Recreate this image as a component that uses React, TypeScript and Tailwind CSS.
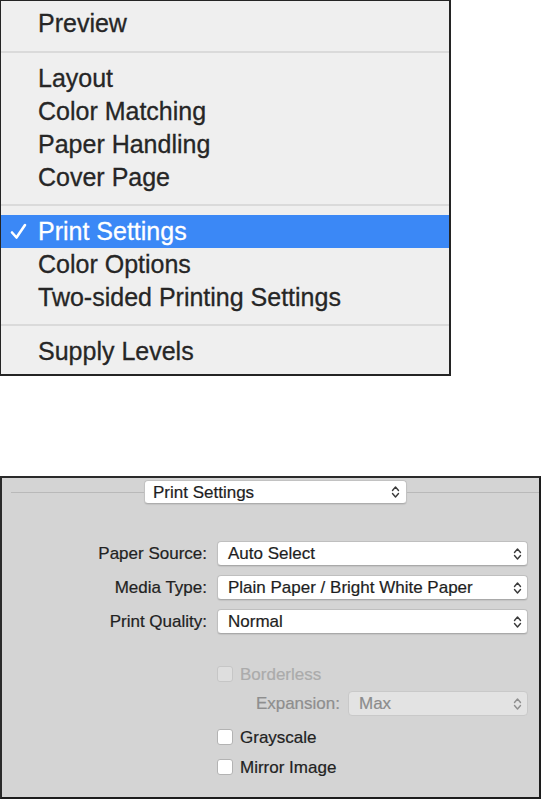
import React from 'react';

const font = { fontFamily: '"Liberation Sans", Arial, Helvetica, sans-serif' };

function Separator({ top = 10 }: { top?: number }) {
  return (
    <div className={top === 11 ? 'pt-[11px] pb-[9px]' : 'pt-[10px] pb-[9px]'}>
      <div className="h-[2px] bg-[#dadada]" />
    </div>
  );
}

function MenuItem({ label, selected = false }: { label: string; selected?: boolean }) {
  return (
    <div
      className={
        'relative flex h-[33px] items-center pl-[37px] text-[25px] leading-none [-webkit-text-stroke:0.3px_currentColor] ' +
        (selected ? 'bg-[#3b88f6] text-white' : 'text-[#262626]')
      }
    >
      {selected && (
        <svg className="absolute left-[9px] top-[8px]" width="17" height="17" viewBox="0 0 17 17">
          <path d="M2 9.5 L6.5 14.5 L15 2" fill="none" stroke="white" strokeWidth="2.6" strokeLinecap="round" strokeLinejoin="round" />
        </svg>
      )}
      {label}
    </div>
  );
}

function Chevrons({ color = '#3a3a3a' }: { color?: string }) {
  return (
    <svg width="9" height="14" viewBox="0 0 9 14">
      <path d="M1.5 5.5 L4.5 2 L7.5 5.5" fill="none" stroke={color} strokeWidth="1.4" strokeLinecap="round" strokeLinejoin="round" />
      <path d="M1.5 8.5 L4.5 12 L7.5 8.5" fill="none" stroke={color} strokeWidth="1.4" strokeLinecap="round" strokeLinejoin="round" />
    </svg>
  );
}

function Select({ value, disabled = false, className = '' }: { value: string; disabled?: boolean; className?: string }) {
  return (
    <div
      className={
        'flex h-[25px] items-center justify-between rounded-[4px] pl-[10px] pr-[5px] text-[17px] leading-none [-webkit-text-stroke:0.2px_currentColor] ' +
        (disabled
          ? 'bg-[#e3e3e3] text-[#8c8c8c] border border-[#c9c9c9] '
          : 'bg-white text-[#1e1e1e] border border-[#bfbfbf] border-b-[#a9a9a9] shadow-[0_1px_1px_rgba(0,0,0,0.08)] ') +
        className
      }
    >
      <span>{value}</span>
      <Chevrons color={disabled ? '#8f8f8f' : '#3a3a3a'} />
    </div>
  );
}

function Checkbox({ label, disabled = false }: { label: string; disabled?: boolean }) {
  return (
    <div className="flex h-[16px] items-center pl-[215px]">
      <div
        className={
          'h-[16px] w-[16px] rounded-[3px] border ' +
          (disabled ? 'bg-[#dedede] border-[#c6c6c6]' : 'bg-white border-[#b3b3b3]')
        }
      />
      <span
        className={
          'ml-[7px] text-[17px] leading-none [-webkit-text-stroke:0.2px_currentColor] ' +
          (disabled ? 'text-[#ababab]' : 'text-[#222]')
        }
      >
        {label}
      </span>
    </div>
  );
}

export default function App() {
  const rows = [
    { label: 'Paper Source:', value: 'Auto Select' },
    { label: 'Media Type:', value: 'Plain Paper / Bright White Paper' },
    { label: 'Print Quality:', value: 'Normal' },
  ];

  return (
    <div className="min-h-[800px] w-[541px] bg-white" style={font}>
      {/* Popup menu */}
      <div className="w-[451px] border-t border-l border-r-2 border-b-2 border-[#242424] bg-[#efefef] pt-[6px] pb-[6px]">
        <MenuItem label="Preview" />
        <Separator top={11} />
        <MenuItem label="Layout" />
        <MenuItem label="Color Matching" />
        <MenuItem label="Paper Handling" />
        <MenuItem label="Cover Page" />
        <Separator />
        <MenuItem label="Print Settings" selected />
        <MenuItem label="Color Options" />
        <MenuItem label="Two-sided Printing Settings" />
        <Separator />
        <MenuItem label="Supply Levels" />
      </div>

      {/* Print settings panel */}
      <div className="mt-[100px] h-[323px] w-[541px] border-2 border-t-[#2a2a2a] border-l-[#2a2a2a] border-r-[#1c1c1c] border-b-[#1c1c1c] bg-[#d4d4d4]">
        <div className="flex items-center pt-[2px]">
          <div className="ml-[9px] h-px w-[133px] bg-[#b9b9b9]" />
          <div className="flex h-[24px] w-[263px] items-center justify-between rounded-[4px] border border-[#c2c2c2] border-b-[#adadad] bg-white pl-[8px] pr-[6px] text-[17px] leading-none text-[#1e1e1e] shadow-[0_1px_1px_rgba(0,0,0,0.08)] [-webkit-text-stroke:0.2px_currentColor]">
            <span>Print Settings</span>
            <Chevrons />
          </div>
          <div className="h-px flex-1 bg-[#b9b9b9]" />
        </div>

        <div className="mt-[37px] flex flex-col gap-[9px]">
          {rows.map((r) => (
            <div key={r.label} className="flex items-center gap-[10px]">
              <div className="w-[205px] text-right text-[17px] leading-none text-[#222] [-webkit-text-stroke:0.2px_currentColor]">
                {r.label}
              </div>
              <Select value={r.value} className="w-[311px]" />
            </div>
          ))}
        </div>

        <div className="mt-[32px]">
          <Checkbox label="Borderless" disabled />
        </div>

        <div className="mt-[9px] flex items-center gap-[8px]">
          <div className="w-[338px] text-right text-[17px] leading-none text-[#8e8e8e] [-webkit-text-stroke:0.2px_currentColor]">
            Expansion:
          </div>
          <Select value="Max" disabled className="w-[180px]" />
        </div>

        <div className="mt-[13px] flex flex-col gap-[14px]">
          <Checkbox label="Grayscale" />
          <Checkbox label="Mirror Image" />
        </div>
      </div>
    </div>
  );
}
